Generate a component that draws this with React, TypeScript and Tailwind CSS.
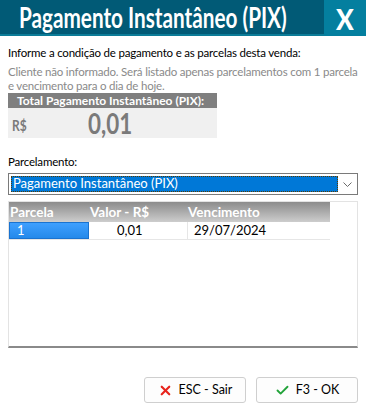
import { Check, X } from "lucide-react";

const ui = { fontFamily: 'Lato, "Liberation Sans", Arial, sans-serif' };

export default function App() {
  return (
    <div className="h-[407px] w-[366px] overflow-hidden bg-white text-[11.5px] tracking-[-0.2px] text-black" style={ui}>
      {/* barra de titulo */}
      <div className="flex h-[36px] border-b-2 border-[#0b7c98] tracking-normal">
        <div className="flex h-[34px] flex-1 items-center overflow-hidden bg-[#015a76] pl-[19px]">
          <span className="inline-block origin-left scale-x-[0.74] whitespace-nowrap text-[28px] font-bold leading-none text-white">
            Pagamento Instantâneo (PIX)
          </span>
        </div>
        <div className="-mb-[2px] flex h-[36px] w-[42px] items-center justify-center bg-[#047f9f]">
          <span className="inline-block scale-x-[0.9] text-[29px] font-black leading-none text-white">X</span>
        </div>
      </div>

      <div className="px-2">
        <p className="mt-[10px] whitespace-nowrap leading-[14px]">Informe a condição de pagamento e as parcelas desta venda:</p>
        <p className="mt-[5px] leading-[14px] text-[#8a8a8a]">
          Cliente não informado. Será listado apenas parcelamentos com 1 parcela e vencimento para o dia de hoje.
        </p>

        {/* total */}
        <div className="w-[209px] tracking-normal">
          <div className="flex h-[15px] items-center whitespace-nowrap bg-[#7f7f7f] pl-[9px] text-[12px] font-bold text-white">
            Total Pagamento Instantâneo (PIX):
          </div>
          <div className="flex h-[30px] items-center bg-[#f0f0f0]">
            <span className="ml-[4px] mt-[4px] inline-block origin-left scale-x-[0.8] text-[15px] font-bold text-[#7a7a7a]">
              R$
            </span>
            <span className="ml-[58px] inline-block origin-left scale-x-[0.8] text-[28px] font-bold leading-none text-[#7a7a7a]">
              0,01
            </span>
          </div>
        </div>

        <p className="mt-[17px] leading-[14px]">Parcelamento:</p>

        {/* combo */}
        <div className="mt-[4px] flex h-[22px] items-center border border-[#7a7a7a] bg-white pl-[2px] tracking-normal">
          <div className="flex h-[16px] flex-1 items-center border border-dotted border-[#5a3a00] bg-[#0078d7] px-[1px] text-[13px] text-white">
            Pagamento Instantâneo (PIX)
          </div>
          <div className="flex w-[19px] justify-center">
            <svg width="9" height="5" viewBox="0 0 9 5" fill="none">
              <path d="M0.5 0.5 L4.5 4.5 L8.5 0.5" stroke="#6b6b6b" strokeWidth="1" />
            </svg>
          </div>
        </div>

        {/* grade */}
        <div className="mt-[6px] h-[147px] border border-b-2 border-[#e3e3e3] border-b-[#8a8a8a] bg-white tracking-normal">
          <div className="flex h-[20px] w-[321px] items-center bg-gradient-to-b from-[#8c8c8c] to-[#cdcdcd] text-[13.5px] font-bold text-white">
            <span className="w-[80px] pl-[1px]">Parcela</span>
            <span className="w-[99px] pl-[1px]">Valor - R$</span>
            <span className="flex-1">Vencimento</span>
          </div>
          <div className="flex h-[18px] w-[321px] border-b border-[#e6e6e6] text-[13px]">
            <div className="flex w-[80px] items-center border border-[#1a73d0] bg-gradient-to-b from-[#3ea0ff] to-[#2489ea] pl-[7px] text-white">
              1
            </div>
            <div className="flex w-[99px] items-center border-r border-[#e6e6e6] pl-[28px]">0,01</div>
            <div className="flex flex-1 items-center pl-[6px]">29/07/2024</div>
          </div>
        </div>

        {/* botoes */}
        <div className="mt-[29px] flex justify-end gap-[10px] tracking-normal">
          <button className="flex h-[26px] w-[102px] items-center justify-center gap-[6px] rounded-[3px] border border-[#cfcfcf] bg-[#fdfdfd] text-[12.5px]">
            <X size={15} strokeWidth={3.5} className="text-[#e8231c]" />
            ESC - Sair
          </button>
          <button className="flex h-[26px] w-[102px] items-center justify-center gap-[6px] rounded-[3px] border border-[#cfcfcf] bg-[#fdfdfd] text-[12.5px]">
            <Check size={15} strokeWidth={3} className="text-[#22a33a]" />
            F3 - OK
          </button>
        </div>
      </div>
    </div>
  );
}
